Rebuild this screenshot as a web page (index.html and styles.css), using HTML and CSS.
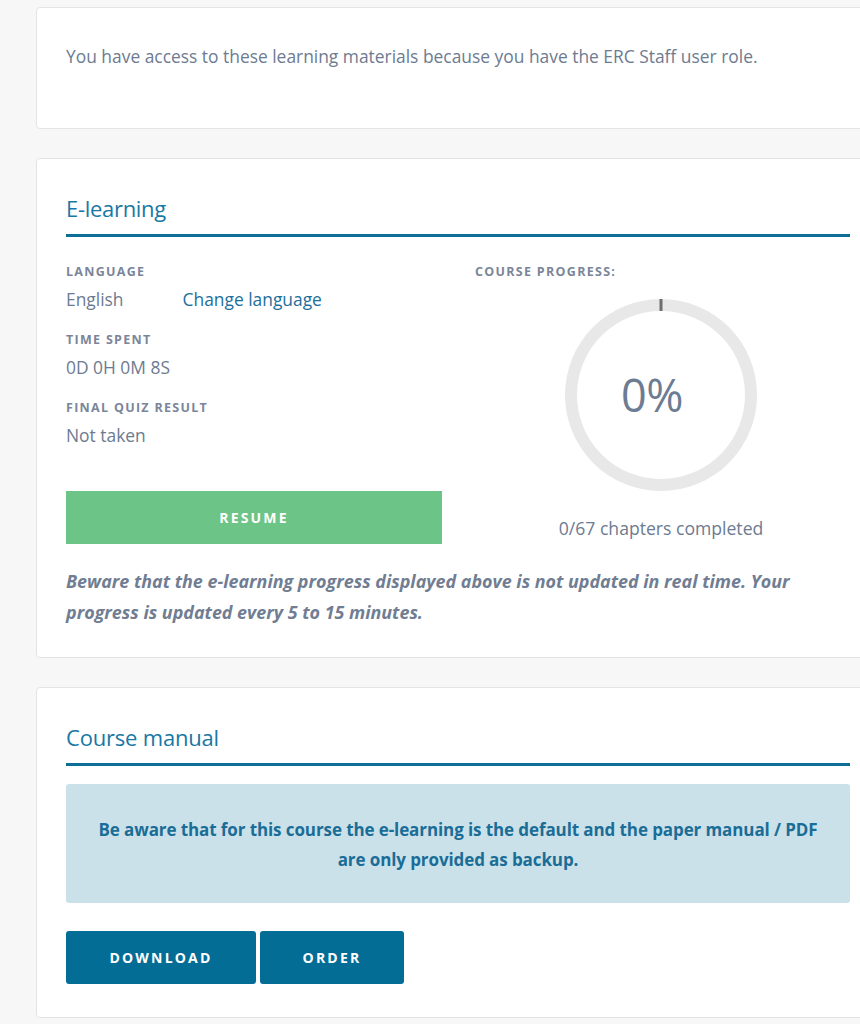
FILE: index.html
```html
<!DOCTYPE html>
<html lang="en">
<head>
<meta charset="utf-8">
<title>Course</title>
<link rel="stylesheet" href="styles.css">
</head>
<body>
<main class="page">
  <section class="card card-intro">
    <p class="intro-text">You have access to these learning materials because you have the ERC Staff user role.</p>
  </section>

  <section class="card card-elearning">
    <h2 class="card-title">E-learning</h2>
    <div class="elearning-grid">
      <div class="info-col">
        <div class="field">
          <div class="label">Language</div>
          <div class="value value-lang"><span>English</span><a class="link" href="#">Change language</a></div>
        </div>
        <div class="field">
          <div class="label">Time spent</div>
          <div class="value">0D 0H 0M 8S</div>
        </div>
        <div class="field">
          <div class="label">Final quiz result</div>
          <div class="value">Not taken</div>
        </div>
        <button class="btn btn-resume">RESUME</button>
      </div>
      <div class="progress-col">
        <div class="label">Course progress:</div>
        <div class="ring">
          <svg class="ring-svg" width="196" height="196" viewBox="0 0 196 196">
            <circle cx="98" cy="98" r="90" fill="none" stroke="#e8e8e8" stroke-width="12"/>
            <rect x="96.5" y="2" width="3" height="12" fill="#6e6e6e"/>
          </svg>
          <span class="ring-value">0%</span>
        </div>
        <div class="chapters">0/67 chapters completed</div>
      </div>
    </div>
    <p class="note">Beware that the e-learning progress displayed above is not updated in real time. Your progress is updated every 5 to 15 minutes.</p>
  </section>

  <section class="card card-manual">
    <h2 class="card-title">Course manual</h2>
    <div class="notice">Be aware that for this course the e-learning is the default and the paper manual / PDF are only provided as backup.</div>
    <div class="btn-row">
      <button class="btn btn-blue btn-download">DOWNLOAD</button>
      <button class="btn btn-blue btn-order">ORDER</button>
    </div>
  </section>
</main>
</body>
</html>
```

FILE: styles.css
```css
html, body {
  margin: 0;
  padding: 0;
  overflow: hidden;
  background: #f7f7f7;
}
body {
  font-family: "Open Sans", Lato, sans-serif;
  color: #6d7b91;
  width: 860px;
  height: 1024px;
}
.page {
  width: 844px;
  padding: 7px 0 0 36px;
  display: flex;
  flex-direction: column;
  gap: 29px;
}
.card {
  background: #fff;
  border: 1px solid #e4e4e4;
  border-radius: 4px;
  padding: 0 29px;
  box-sizing: border-box;
}
.card-intro {
  height: 122px;
  display: flex;
  align-items: center;
}
.intro-text {
  margin: 0;
  font-size: 17.4px;
  position: relative;
  top: -12px;
}
.card-elearning {
  height: 500px;
  padding-top: 34px;
}
.card-title {
  margin: 0;
  font-weight: 400;
  font-size: 22px;
  letter-spacing: -0.3px;
  color: #1878a5;
  line-height: 30px;
  padding-bottom: 11px;
  border-bottom: 3px solid #0d6f98;
}
.card-manual .card-title {
  letter-spacing: -0.2px;
}
.elearning-grid {
  display: grid;
  grid-template-columns: 376px 376px;
  column-gap: 33px;
  margin-top: 27px;
}
.label {
  font-size: 12.5px;
  font-weight: 700;
  letter-spacing: 1.3px;
  text-transform: uppercase;
  color: #7b8599;
  line-height: 16px;
}
.value {
  font-size: 17.4px;
  line-height: 22px;
  margin-top: 8px;
}
.field + .field {
  margin-top: 22px;
}
.value-lang {
  display: flex;
  gap: 59px;
}
.link {
  color: #1d6f9b;
  text-decoration: none;
}
.btn {
  border: none;
  font-family: inherit;
  font-weight: 700;
  font-size: 14px;
  letter-spacing: 2.2px;
  color: #fff;
  cursor: pointer;
  height: 53px;
}
.btn-resume {
  margin-top: 45px;
  width: 376px;
  background: #6cc487;
  border-radius: 0;
}
.progress-col {
  display: flex;
  flex-direction: column;
  align-items: flex-start;
}
.ring {
  position: relative;
  width: 196px;
  height: 196px;
  margin: 17px 0 0 88px;
}
.ring-svg {
  display: block;
}
.ring-value {
  position: absolute;
  left: 0;
  right: 0;
  top: 71px;
  text-align: center;
  font-size: 45px;
  line-height: 54px;
  letter-spacing: -0.5px;
  color: #6b7c93;
  padding-right: 18px;
}
.chapters {
  align-self: stretch;
  text-align: center;
  font-size: 17.6px;
  margin-top: 23px;
  padding-right: 4px;
}
.note {
  margin: 22px 0 0;
  font-size: 17.9px;
  font-style: italic;
  font-weight: 700;
  letter-spacing: 0;
  line-height: 31px;
  color: #707d92;
}
.card-manual {
  height: 331px;
  padding-top: 34px;
}
.notice {
  margin-top: 18px;
  background: #cbe1ea;
  border-radius: 3px;
  height: 119px;
  box-sizing: border-box;
  padding: 31px 20px 0;
  text-align: center;
  font-size: 17px;
  font-weight: 700;
  letter-spacing: -0.1px;
  line-height: 30px;
  color: #1a6d96;
}
.btn-row {
  display: flex;
  gap: 4px;
  margin-top: 28px;
}
.btn-blue {
  background: #046d96;
  border-radius: 3px;
}
.btn-download { width: 190px; }
.btn-order { width: 144px; }
```
